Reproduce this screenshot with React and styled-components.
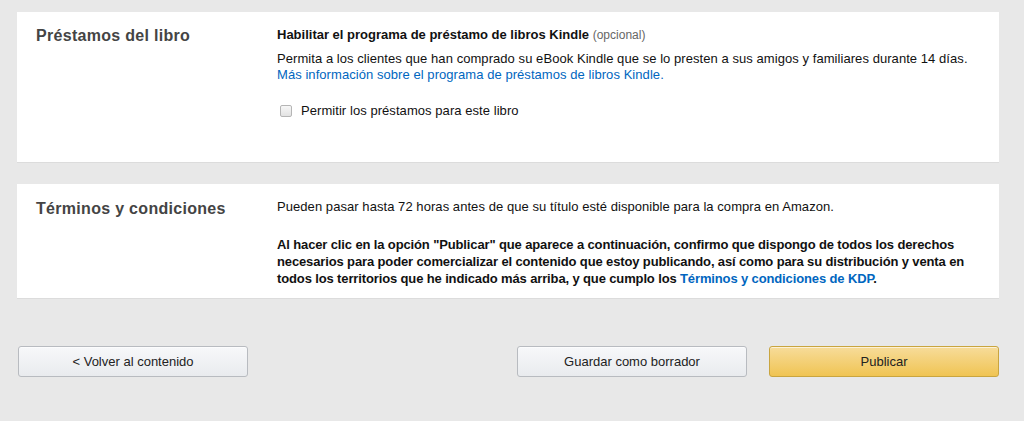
import React from "react";
import styled, { createGlobalStyle } from "styled-components";

const Global = createGlobalStyle`
  html, body { margin: 0; padding: 0; background: #e8e8e8; }
  body { font-family: "Liberation Sans", Arial, sans-serif; color: #111; }
`;

const Page = styled.div`
  padding: 12px 25px 0 17px;
  display: flex;
  flex-direction: column;
`;

const Card = styled.section`
  background: #fff;
  border-bottom: 1px solid #dcdcdc;
  display: grid;
  grid-template-columns: 241px 1fr;
  padding: ${(p) => p.$pad};
  margin-bottom: ${(p) => p.$mb || 0}px;
`;

const Title = styled.h2`
  margin: 0;
  font-size: 16px;
  font-weight: 700;
  color: #444;
  line-height: 20px;
  letter-spacing: 0.3px;
`;

const Body = styled.div`
  display: flex;
  flex-direction: column;
  font-size: 13px;
  line-height: 16px;
  letter-spacing: 0.06px;
`;

const Heading = styled.div`
  font-weight: 700;
  line-height: 17px;
  letter-spacing: 0;
`;

const Optional = styled.span`
  font-weight: 400;
  font-size: 12px;
  color: #666;
`;

const Para = styled.p`
  margin: ${(p) => p.$mt || 0}px 0 0;
  font-weight: ${(p) => (p.$bold ? 700 : 400)};
  line-height: ${(p) => p.$lh || 16}px;
  letter-spacing: ${(p) => (p.$bold ? "-0.13px" : "inherit")};
`;

const Link = styled.a`
  color: #0066c0;
  text-decoration: none;
`;

const CheckRow = styled.label`
  display: flex;
  align-items: center;
  gap: 9px;
  margin-top: 19px;
  height: 18px;
  padding-left: 3px;
`;

const Box = styled.span`
  width: 10px;
  height: 10px;
  border: 1px solid #b5b5b5;
  border-radius: 2px;
  background: linear-gradient(#f7f7f7, #e2e2e2);
`;

const Actions = styled.div`
  display: flex;
  align-items: center;
  margin-top: 47px;
`;

const Button = styled.button`
  width: 230px;
  height: 31px;
  border-radius: 3px;
  font-family: inherit;
  font-size: 13px;
  color: #222;
  border: 1px solid ${(p) => (p.$primary ? "#c9a53f" : "#b8bbc0")};
  background: ${(p) =>
    p.$primary
      ? "linear-gradient(#f7dc9a, #f0c453)"
      : "linear-gradient(#f7f8fa, #e9ebee)"};
  margin-left: ${(p) => p.$ml || 0}px;
  box-shadow: 0 1px 0 rgba(255,255,255,.6) inset;
`;

export default function App() {
  return (
    <>
      <Global />
      <Page>
        <Card $pad="14px 20px 42px 19px" $mb={21}>
          <Title>Préstamos del libro</Title>
          <Body>
            <Heading>
              Habilitar el programa de préstamo de libros Kindle <Optional>(opcional)</Optional>
            </Heading>
            <Para $mt={7}>
              Permita a los clientes que han comprado su eBook Kindle que se lo presten a sus amigos y familiares durante 14 días.
              <br />
              <Link href="#">Más información sobre el programa de préstamos de libros Kindle.</Link>
            </Para>
            <CheckRow>
              <Box />
              Permitir los préstamos para este libro
            </CheckRow>
          </Body>
        </Card>
        <Card $pad="15px 20px 11px 19px">
          <Title>Términos y condiciones</Title>
          <Body>
            <Para>Pueden pasar hasta 72 horas antes de que su título esté disponible para la compra en Amazon.</Para>
            <Para $mt={21} $bold $lh={17}>
              Al hacer clic en la opción "Publicar" que aparece a continuación, confirmo que dispongo de todos los derechos
              <br />
              necesarios para poder comercializar el contenido que estoy publicando, así como para su distribución y venta en
              <br />
              todos los territorios que he indicado más arriba, y que cumplo los <Link href="#">Términos y condiciones de KDP</Link>.
            </Para>
          </Body>
        </Card>
        <Actions>
          <Button $ml={1}>&lt; Volver al contenido</Button>
          <Button $ml={269}>Guardar como borrador</Button>
          <Button $ml={22} $primary>Publicar</Button>
        </Actions>
      </Page>
    </>
  );
}
